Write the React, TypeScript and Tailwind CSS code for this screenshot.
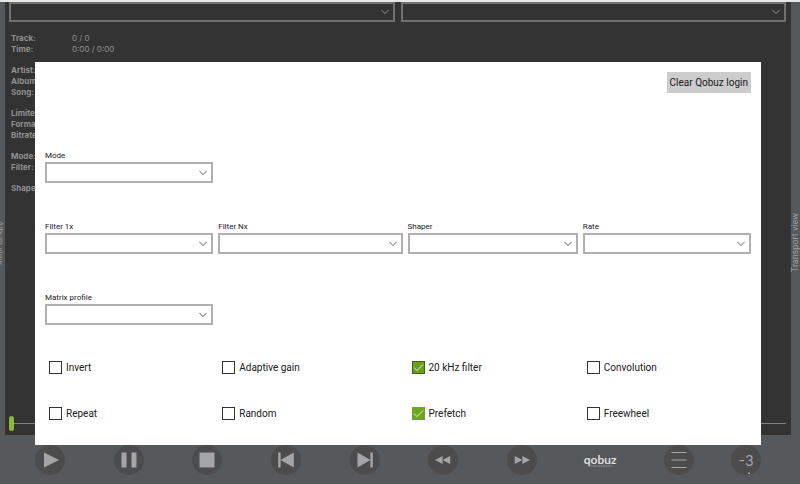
import React, { useState } from 'react';

const INFO_GROUPS = [
  [{ label: 'Track:', value: '0 / 0' }, { label: 'Time:', value: '0:00 / 0:00' }],
  [{ label: 'Artist:', value: '' }, { label: 'Album:', value: '' }, { label: 'Song:', value: '' }],
  [{ label: 'Limited:', value: '' }, { label: 'Format:', value: '' }, { label: 'Bitrate:', value: '' }],
  [{ label: 'Mode:', value: '' }, { label: 'Filter:', value: '' }],
  [{ label: 'Shaper:', value: '' }],
];

const TOGGLES = [
  ['Invert', 'Adaptive gain', '20 kHz filter', 'Convolution'],
  ['Repeat', 'Random', 'Prefetch', 'Freewheel'],
];

const Dropdown = ({ id, dark, ariaLabel }: { id: string; dark?: boolean; ariaLabel?: string }) => (
  <div className="relative w-full">
    <select
      id={id}
      aria-label={ariaLabel}
      className={dark
        ? 'block w-full h-5 appearance-none border-2 border-[#707070] bg-[#333333] text-[#a0a0a0] px-1'
        : 'block w-full h-[21px] appearance-none border-2 border-[#b0b0b0] bg-white text-[#303030] px-1'}
    >
      <option value=""></option>
    </select>
    <svg
      className={dark ? 'absolute right-[6px] top-[7px] w-2 h-[6px] pointer-events-none text-[#909090]' : 'absolute right-[6px] top-2 w-2 h-[6px] pointer-events-none text-[#606060]'}
      viewBox="0 0 8 6" fill="none" stroke="currentColor" strokeWidth="1"
    >
      <path d="M0.3 0.8 L4 4.6 L7.7 0.8" />
    </svg>
  </div>
);

const Field = ({ id, label }: { id: string; label: string }) => (
  <div className="flex flex-col">
    <label htmlFor={id} className="text-[8px] leading-[13px] text-[#202020]">{label}</label>
    <Dropdown id={id} />
  </div>
);

const Toggle = ({ label, checked, focused, onChange }: { label: string; checked: boolean; focused: boolean; onChange: () => void }) => (
  <label className="flex items-center gap-1 pl-1 text-[10px] leading-[13px] text-[#202020]">
    <span className="relative block w-[13px] h-[13px]">
      <input
        type="checkbox"
        checked={checked}
        onChange={onChange}
        className={focused
          ? 'block w-[13px] h-[13px] appearance-none border border-[#333333] bg-white checked:border-[#426511] checked:bg-[#6a9f1e]'
          : 'block w-[13px] h-[13px] appearance-none border border-[#333333] bg-white checked:border-[#70a51f] checked:bg-[#70a51f]'}
      />
      {checked && (
        <svg className="absolute inset-0 w-[13px] h-[13px] pointer-events-none" viewBox="0 0 13 13" fill="none" stroke="#e8f2d8" strokeWidth="1">
          <path d="M2 6.6 L5 9.6 L11 3.4" />
        </svg>
      )}
    </span>
    {label}
  </label>
);

const TransportButton = ({ label, children }: { label: string; children: React.ReactNode }) => (
  <button aria-label={label} className="flex w-[30px] h-[30px] items-center justify-center rounded-full bg-[#4c4c4c] text-[#a4a5a7]">
    <svg className="w-[30px] h-[30px]" viewBox="0 0 30 30" fill="currentColor">{children}</svg>
  </button>
);

const TransportBar = () => (
  <footer className="flex pt-[10px] pb-[9px] pl-[11px] pr-[26px] [&>div]:flex [&>div]:justify-center [&>div]:items-center">
    <div className="flex-1"><TransportButton label="Play"><path d="M9 7.5 V22.5 L24 15 Z" /></TransportButton></div>
    <div className="flex-1"><TransportButton label="Pause"><path d="M7.5 7.5 H12.5 V22.5 H7.5 Z M17.5 7.5 H22.5 V22.5 H17.5 Z" /></TransportButton></div>
    <div className="flex-1"><TransportButton label="Stop"><path d="M7.5 7.5 H22.5 V22.5 H7.5 Z" /></TransportButton></div>
    <div className="flex-1"><TransportButton label="Previous"><path d="M7.2 7.5 H9.6 V22.5 H7.2 Z M22.8 7.5 V22.5 L9.6 15 Z" /></TransportButton></div>
    <div className="flex-1"><TransportButton label="Next"><path d="M22.8 7.5 H20.4 V22.5 H22.8 Z M7.5 7.5 V22.5 L20.4 15 Z" /></TransportButton></div>
    <div className="flex-1"><TransportButton label="Rewind"><path d="M14.6 11 V19 L7 15 Z M22.2 11 V19 L14.6 15 Z" /></TransportButton></div>
    <div className="flex-1"><TransportButton label="Fast forward"><path d="M7.8 11 V19 L15.4 15 Z M15.4 11 V19 L23 15 Z" /></TransportButton></div>
    <div className="flex-1">
      <button className="flex flex-col items-center font-[Lato,sans-serif] text-[12px] leading-[11px] font-bold text-[#dedede]">
        qobuz
        <svg className="w-6 h-[2px]" viewBox="0 0 24 2"><path d="M0 1 H24" stroke="#8d9092" strokeWidth="1" strokeDasharray="2 0.5" /></svg>
      </button>
    </div>
    <div className="flex-1"><TransportButton label="Menu"><path d="M7.5 7 H22.5 V8 H7.5 Z M7.5 14.5 H22.5 V15.5 H7.5 Z M7.5 22 H22.5 V23 H7.5 Z" /></TransportButton></div>
    <div className="w-14">
      <button aria-label="Volume" className="flex flex-col w-[30px] h-[30px] items-center justify-end rounded-full bg-[#4c4c4c] text-[#a4a5a7] text-[14px] leading-4">
        -3
        <svg className="w-2 h-[6px]" viewBox="0 0 8 6" fill="currentColor"><path d="M6 3.5 H8.5 V5 H6 Z" /></svg>
      </button>
    </div>
  </footer>
);

const SettingsDialog = () => {
  const [active, setActive] = useState<string[]>(['20 kHz filter', 'Prefetch']);
  const [focused, setFocused] = useState('20 kHz filter');

  const toggle = (name: string) => {
    setFocused(name);
    setActive(active.includes(name) ? active.filter((n) => n !== name) : [...active, name]);
  };

  return (
    <div role="dialog" aria-label="Settings" className="absolute top-[62px] left-[35px] right-[39px] bg-white px-[10px] pt-[10px] pb-[25px] font-[Roboto,sans-serif]">
      <div className="flex justify-end">
        <button className="h-[21px] px-[3px] bg-[#cccccc] text-[10px] leading-[13px] text-[#202020]">Clear Qobuz login</button>
      </div>
      <div className="mt-14 grid grid-cols-[168fr_184fr_170fr_168fr] gap-x-[5px] gap-y-[37px]">
        <div className="col-span-4 grid grid-cols-subgrid"><Field id="mode" label="Mode" /></div>
        <Field id="filter-1x" label="Filter 1x" />
        <Field id="filter-nx" label="Filter Nx" />
        <Field id="shaper" label="Shaper" />
        <Field id="rate" label="Rate" />
        <Field id="matrix" label="Matrix profile" />
      </div>
      <div className="mt-9 grid grid-cols-[168fr_184fr_170fr_168fr] gap-x-[5px] gap-y-[33px]">
        {TOGGLES.flat().map((name) => (
          <Toggle key={name} label={name} checked={active.includes(name)} focused={focused === name} onChange={() => toggle(name)} />
        ))}
      </div>
    </div>
  );
};

export const PlayerPage = () => {
  const [position, setPosition] = useState(0);

  return (
    <div className="relative flex flex-col min-h-screen overflow-hidden border-t-2 border-[#e6e8e8] bg-[#55595b] font-[Inter,sans-serif]">
      <div className="flex flex-1">
        <div className="flex w-[5px] items-center justify-end pt-12">
          <span className="[writing-mode:vertical-rl] whitespace-nowrap text-[8px] leading-[10px] text-[#9a9c9e]">Album view</span>
        </div>
        <main className="flex flex-1 flex-col bg-[#333333] pl-1 pr-[5px]">
          <div className="grid grid-cols-2 gap-[6px]">
            <Dropdown id="source" dark ariaLabel="Source" />
            <Dropdown id="output" dark ariaLabel="Output" />
          </div>
          <div className="mt-[11px] flex flex-col gap-[10px] px-[2px] text-[8px] leading-[11px] text-[#909090]">
            {INFO_GROUPS.map((group, i) => (
              <dl key={i} className="grid grid-cols-[61px_1fr]">
                {group.map((row) => (
                  <React.Fragment key={row.label}>
                    <dt className="font-bold">{row.label}</dt>
                    <dd>{row.value}</dd>
                  </React.Fragment>
                ))}
              </dl>
            ))}
          </div>
          <input
            type="range"
            aria-label="Position"
            min={0}
            max={100}
            value={position}
            onChange={(e) => setPosition(Number(e.target.value))}
            className="mt-auto mb-1 block w-full h-[15px] appearance-none bg-linear-to-r from-[#808080] to-[#808080] bg-size-[100%_1px] bg-center bg-no-repeat [&::-webkit-slider-thumb]:appearance-none [&::-webkit-slider-thumb]:w-[5px] [&::-webkit-slider-thumb]:h-[15px] [&::-webkit-slider-thumb]:rounded-full [&::-webkit-slider-thumb]:bg-[#8db53f]"
          />
        </main>
        <div className="flex w-[9px] items-center justify-start pt-12">
          <span className="[writing-mode:vertical-rl] rotate-180 whitespace-nowrap font-[Roboto,sans-serif] text-[9px] leading-[9px] text-[#9a9c9e]">Transport view</span>
        </div>
      </div>
      <TransportBar />
      {/* the border on the page offsets the overlay from the window top */}
      <div className="absolute inset-x-0 -top-[2px]"><SettingsDialog /></div>
    </div>
  );
};
export default PlayerPage;
